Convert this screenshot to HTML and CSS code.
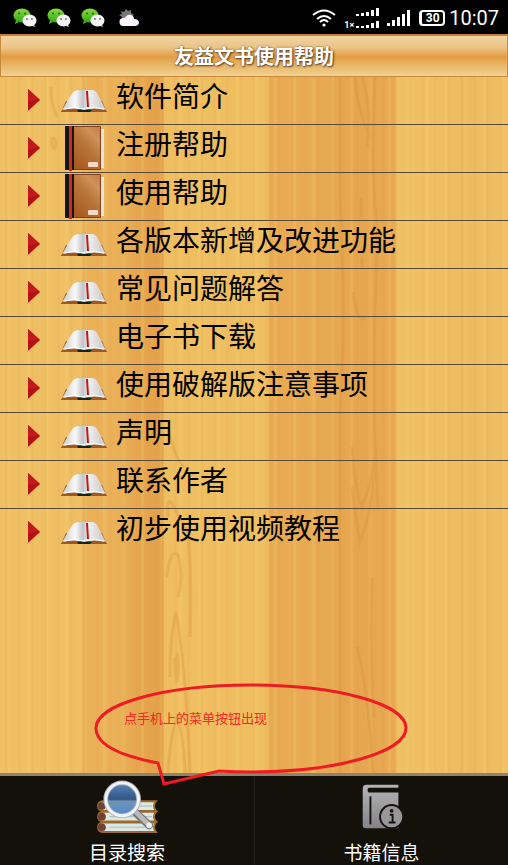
FILE: index.html
```html
<!DOCTYPE html>
<html lang="zh-CN">
<head>
<meta charset="utf-8">
<meta name="viewport" content="width=device-width, initial-scale=1">
<title>友益文书使用帮助</title>
<link rel="stylesheet" href="styles.css">
</head>
<body>
<svg class="defs" width="0" height="0" aria-hidden="true">
  <defs>
    <linearGradient id="page" x1="0" x2="1" y1="0" y2="0">
      <stop offset="0" stop-color="#c8c8c8"/><stop offset=".3" stop-color="#fafafa"/><stop offset=".48" stop-color="#c4c4c4"/><stop offset=".6" stop-color="#f0f0f0"/><stop offset="1" stop-color="#c6c6c6"/>
    </linearGradient>
    <linearGradient id="cover" x1=".9" x2=".2" y1="0" y2="1">
      <stop offset="0" stop-color="#c98249"/><stop offset=".2" stop-color="#cf9158"/><stop offset=".5" stop-color="#b97438"/><stop offset="1" stop-color="#a85a22"/>
    </linearGradient>
    <linearGradient id="grey" x1="0" x2="0" y1="0" y2="1">
      <stop offset="0" stop-color="#b4b4b6"/><stop offset="1" stop-color="#848488"/>
    </linearGradient>
    <linearGradient id="lens" x1="0" x2="0" y1="0" y2="1">
      <stop offset="0" stop-color="#5484bd"/><stop offset=".5" stop-color="#345684"/><stop offset=".56" stop-color="#7292b4"/><stop offset="1" stop-color="#4d8ad6"/>
    </linearGradient>
    <linearGradient id="leaf" x1="0" x2="0" y1="0" y2="1">
      <stop offset="0" stop-color="#86dc3c"/><stop offset="1" stop-color="#36a51c"/>
    </linearGradient>
    <symbol id="open-book" viewBox="0 0 48 48">
      <path d="M1 35 47 35 42 24 6 24Z" fill="#9c5a24"/>
      <path d="M2 33 11 18Q14 13 19 13H32Q36 13 38 18L46 33Q34 30 24 33Q14 30 2 33Z" fill="url(#page)"/>
      <path d="M17 33Q22 32 24 33Q27 32 32 33L30 35H18Z" fill="#11251f"/>
      <path d="M26 14H28L29 30H27Z" fill="#c91515"/>
      <path d="M4 32Q15 29 24 32Q34 29 44 32" fill="none" stroke="#fff"/>
    </symbol>
    <symbol id="closed-book" viewBox="0 0 48 48">
      <path d="M35 4H44V43H35Z" fill="#eeeae3"/><path d="M41 5V42M43 5V42" stroke="#cfcbc3" stroke-width=".5"/>
      <rect x="5" y="1" width="36" height="44" rx="1" fill="#7f421b"/>
      <rect x="13" y="2" width="27" height="42" fill="url(#cover)"/>
      <path d="M5 1H14V45H6Q5 45 5 44Z" fill="#111917"/>
      <path d="M9 1H12L12 46H9Z" fill="#d42824"/>
      <rect x="28" y="37" width="10" height="5" rx="1" fill="#f3d9c5"/>
    </symbol>
    <symbol id="arrow" viewBox="0 0 14 24"><path d="M1 1 13 12 1 23Z" fill="#b51218"/><path d="M1 1 13 12 1 13Z" fill="#c21a1c"/></symbol>
    <symbol id="chat" viewBox="0 0 24 20">
      <path d="M3 12 2 16 6 14Z" fill="#4eb526"/><ellipse cx="9" cy="7.5" rx="8.5" ry="7" fill="url(#leaf)"/>
      <circle cx="6" cy="5.5" r="1" fill="#216014"/><circle cx="12" cy="5.5" r="1" fill="#216014"/>
      <path d="M20 15 22 19 17 17Z" fill="#eee"/><ellipse cx="16.5" cy="12.5" rx="7" ry="6" fill="#f3f3f3"/>
      <circle cx="14" cy="11" r="1" fill="#777"/><circle cx="19" cy="11" r="1" fill="#777"/>
    </symbol>
  </defs>
</svg>

<div class="app">
  <div class="status">
    <div class="status-group notices" aria-hidden="true">
      <svg class="chat"><use href="#chat"/></svg>
      <svg class="chat"><use href="#chat"/></svg>
      <svg class="chat"><use href="#chat"/></svg>
      <svg class="weather" viewBox="0 0 20 18">
        <path d="M7 0 9 2 12 1 12 4 15 6 12 8 9 10 5 11 3 10 3 8 0 6 3 5 2 2 5 3Z" fill="#777"/>
        <path d="M5 17A4 4 0 0 1 4 9Q5 8 6 9Q8 5 12 6Q15 7 15 10Q20 10 20 14Q19 17 16 17Z" fill="#fbf5ff"/>
      </svg>
    </div>
    <div class="status-group">
      <svg class="wifi" viewBox="0 0 24 18" aria-hidden="true">
        <path d="M1 6Q12-3 23 6M5 10Q12 4 19 10M8 13Q12 9 16 13" fill="none" stroke="#fff" stroke-width="2"/><circle cx="12" cy="16" r="1.6" fill="#fff"/>
      </svg>
      <div class="dual">
        <span class="network">1×</span>
        <svg class="dual-bars" viewBox="0 0 24 22" aria-hidden="true">
          <path d="M1 7H4V9H1ZM6 6H9V9H6ZM11 5H14V9H11ZM16 3H19V9H16ZM21 1H24V9H21ZM1 19H4V21H1ZM6 19H9V21H6ZM11 18H14V21H11ZM16 16H19V21H16ZM21 14H24V21H21Z" fill="#fff"/>
        </svg>
      </div>
      <svg class="bars" viewBox="0 0 24 18" aria-hidden="true"><path d="M0 14H3V17H0ZM5 11H8V17H5ZM10 8H13V17H10ZM15 5H18V17H15ZM20 1H23V17H20Z" fill="#fff"/></svg>
      <span class="battery">30</span>
      <time class="clock">10:07</time>
    </div>
  </div>

  <header class="title"><h1>友益文书使用帮助</h1></header>

  <main class="content">
    <svg class="grain" viewBox="0 0 508 696" preserveAspectRatio="none" aria-hidden="true">
      <g fill="none" stroke="#d58c35" stroke-width="3" opacity=".28">
        <path d="M51 10Q50 25 57 40M52 60Q50 68 55 72Q58 66 53 60"/>
        <path d="M168 696Q170 660 177 640Q184 660 185 696M170 600Q170 560 176 535Q186 590 190 696M167 500Q170 470 178 478Q184 500 178 520M168 440Q166 415 174 430L188 455Q192 500 190 560M168 350Q174 380 184 390"/>
        <path d="M175 580Q174 595 177 605Q180 590 177 576" fill="#d58c35"/>
        <path d="M355 0Q356 30 370 60M362 0Q372 30 367 70M340 0V120Q346 240 340 340V696M375 0Q370 100 378 160Q370 300 378 430M352 410Q357 450 360 465Q372 435 373 400M352 370Q356 420 362 430Q372 405 375 380M361 120V140M362 180V190M353 215Q358 250 366 240M357 570Q368 610 373 696M372 500Q370 590 374 640"/>
      </g>
    </svg>
    <ul class="topics">
      <li><a href="#intro"><svg class="arrow"><use href="#arrow"/></svg><svg class="book"><use href="#open-book"/></svg><span>软件简介</span></a></li>
      <li><a href="#register"><svg class="arrow"><use href="#arrow"/></svg><svg class="book"><use href="#closed-book"/></svg><span>注册帮助</span></a></li>
      <li><a href="#usage"><svg class="arrow"><use href="#arrow"/></svg><svg class="book"><use href="#closed-book"/></svg><span>使用帮助</span></a></li>
      <li><a href="#versions"><svg class="arrow"><use href="#arrow"/></svg><svg class="book"><use href="#open-book"/></svg><span>各版本新增及改进功能</span></a></li>
      <li><a href="#faq"><svg class="arrow"><use href="#arrow"/></svg><svg class="book"><use href="#open-book"/></svg><span>常见问题解答</span></a></li>
      <li><a href="#download"><svg class="arrow"><use href="#arrow"/></svg><svg class="book"><use href="#open-book"/></svg><span>电子书下载</span></a></li>
      <li><a href="#notes"><svg class="arrow"><use href="#arrow"/></svg><svg class="book"><use href="#open-book"/></svg><span>使用破解版注意事项</span></a></li>
      <li><a href="#statement"><svg class="arrow"><use href="#arrow"/></svg><svg class="book"><use href="#open-book"/></svg><span>声明</span></a></li>
      <li><a href="#contact"><svg class="arrow"><use href="#arrow"/></svg><svg class="book"><use href="#open-book"/></svg><span>联系作者</span></a></li>
      <li><a href="#video"><svg class="arrow"><use href="#arrow"/></svg><svg class="book"><use href="#open-book"/></svg><span>初步使用视频教程</span></a></li>
    </ul>
    <div class="callout">
      <svg viewBox="0 0 314 104" aria-hidden="true"><path d="M64 80C22 72 2 60 2 45C2 21 71 2 157 2S312 21 312 45S243 89 157 89Q140 89 125 88L70 101Z" fill="none" stroke="#ed1c24" stroke-width="3"/></svg>
      <p>点手机上的菜单按钮出现</p>
    </div>
  </main>

  <nav class="menu">
    <button type="button">
      <svg class="menu-icon" viewBox="0 0 64 56" aria-hidden="true">
        <g fill="#dbe8e3" stroke="#9b6a2d" stroke-width="2">
          <path d="M62 22H8Q2 22 2 27T8 32H62Q58 27 62 22Z"/><path d="M62 33H8Q2 33 2 38T8 43H62Q58 38 62 33Z"/><path d="M62 44H8Q2 44 2 49T8 54H62Q58 49 62 44Z"/>
        </g>
        <path d="M14 27H58M14 38H58M14 49H58" stroke="#a9bcb8"/>
        <g fill="#704135"><circle cx="6" cy="27" r="4"/><circle cx="6" cy="38" r="4"/><circle cx="6" cy="49" r="4"/></g>
        <path d="M39 32 55 47" stroke="#777" stroke-width="8" stroke-linecap="round"/><path d="M39 31 55 47" stroke="#bbb" stroke-width="5" stroke-linecap="round"/><circle cx="55" cy="47" r="3" fill="#eee"/>
        <circle cx="27" cy="20" r="17" fill="url(#lens)" stroke="#a6aeb8" stroke-width="5"/><circle cx="27" cy="20" r="17" fill="none" stroke="#f2f3f5" stroke-width="3"/>
      </svg>
      <span>目录搜索</span>
    </button>
    <button type="button">
      <svg class="menu-icon" viewBox="0 0 64 56" aria-hidden="true">
        <path d="M16 5H49V8H19Q17 8 17 10Q17 13 19 13H49V50H15Q12 50 12 47V9Q12 5 16 5Z" fill="url(#grey)"/>
        <path d="M20 17V46" stroke="#17130f" stroke-width="2"/>
        <circle cx="42" cy="38" r="13" fill="#17130f"/><circle cx="42" cy="38" r="11" fill="#98989b"/>
        <path d="M40 36H43V44M39 44H46" fill="none" stroke="#17130f" stroke-width="2"/><circle cx="42" cy="32" r="2" fill="#17130f"/>
      </svg>
      <span>书籍信息</span>
    </button>
  </nav>
</div>
</body>
</html>
```
FILE: styles.css
```css
* { box-sizing: border-box; }

body {
  margin: 0;
  background: #000;
  font-family: "Noto Sans CJK SC", sans-serif;
}

.defs { position: absolute; }

.app {
  display: flex;
  flex-direction: column;
  min-height: 100vh;
}

.status {
  display: flex;
  align-items: center;
  justify-content: space-between;
  height: 34px;
  padding: 2px 9px 0 13px;
  color: #fff;
}

.status-group { display: flex; align-items: center; gap: 8px; }
.notices { gap: 10px; }
.chat { width: 24px; height: 20px; }
.weather { width: 20px; height: 18px; margin-left: 4px; }
.wifi { width: 24px; height: 18px; }
.dual { display: flex; align-items: flex-end; gap: 1px; }
.network { font: 700 9px/8px Roboto, sans-serif; }
.dual-bars { width: 24px; height: 22px; }
.bars { width: 24px; height: 18px; }

.battery {
  width: 26px;
  border: 2px solid #fff;
  border-left-width: 3px;
  border-radius: 4px;
  font: 700 12px/12px Roboto, sans-serif;
  text-align: center;
}

.clock { margin-left: -4px; font: 400 20px/24px Roboto, sans-serif; }

.title {
  display: flex;
  align-items: center;
  justify-content: center;
  height: 43px;
  border: 1px solid #c88a3d;
  border-top: 2px solid #c87d30;
  background: linear-gradient(#f0d4a4, #ecc383 30%, #e29c43 52%, #e8b363 70%, #f0d293);
}

.title h1 {
  margin: 0;
  color: #fff;
  font-size: 20px;
  font-weight: 700;
  line-height: 24px;
  text-shadow: 1px 1px 2px #604020, 0 0 2px #705030;
}

.content {
  position: relative;
  flex: 1;
  background:
    repeating-linear-gradient(90deg, #d98f3500 0 5px, #d98f351c 6px 7px, #d98f3500 8px 13px),
    repeating-linear-gradient(90deg, #ffdf7a00 0 7px, #ffdf7a2c 9px 10px, #ffdf7a00 12px 19px),
    linear-gradient(90deg,
      #efbf63 0 16%, #eab159 16.4% 23%, #e6a74f 27%, #e3a04a 32%,
      #efbe61 32.4% 52.8%, #e8ab54 53% 60%, #e6a650 70%, #e8a953 77.8%,
      #f0c065 78% 84%, #edba5f 92%, #efbf66);
}

.grain {
  position: absolute;
  inset: 0;
  width: 100%;
  height: 100%;
}

.topics {
  position: relative;
  margin: 0;
  padding: 0;
  list-style: none;
}

.topics li { height: 48px; border-bottom: 1px solid #5b4b36; }
.topics li:last-child { border-bottom: 0; }

.topics a {
  display: flex;
  align-items: flex-start;
  height: 100%;
  padding-left: 27px;
  color: #000;
  font-size: 28px;
  line-height: 36px;
  text-decoration: none;
}

.arrow { width: 14px; height: 24px; margin: 11px 19px 0 0; }
.book { width: 48px; height: 48px; margin-right: 8px; }

.callout {
  position: absolute;
  z-index: 1;
  bottom: -14px;
  left: 94px;
  width: 314px;
}

.callout svg { display: block; width: 100%; }

.callout p {
  position: absolute;
  top: 26px;
  left: 30px;
  margin: 0;
  color: #ed2a24;
  font-size: 13px;
  line-height: 18px;
}

.menu {
  display: grid;
  grid-template-columns: 1fr 1fr;
  border-top: 3px solid #8e8370;
  background: #14100a;
}

.menu button {
  display: flex;
  flex-direction: column;
  align-items: center;
  gap: 4px;
  padding: 4px 0 0;
  border: 0;
  background: none;
  color: #fff;
  font: 400 19px/27px "Noto Sans CJK SC", sans-serif;
}

.menu button + button { border-left: 1px solid #24211c; }
.menu-icon { display: block; width: 64px; height: 54px; }
```
